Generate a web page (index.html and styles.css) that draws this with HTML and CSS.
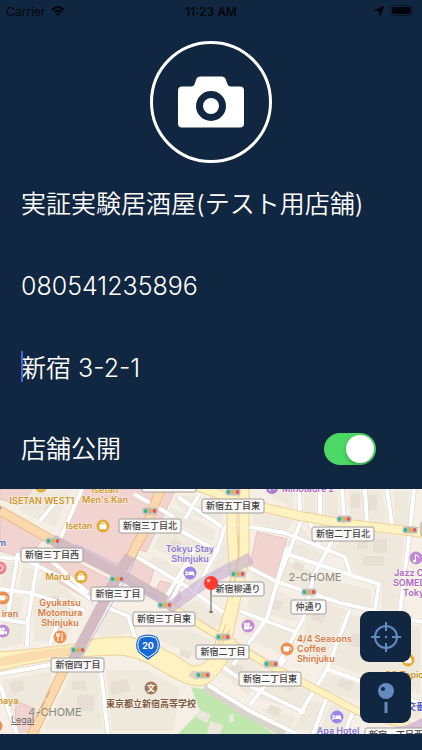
FILE: index.html
```html
<!DOCTYPE html>
<html lang="ja">
<head>
    <meta charset="UTF-8">
    <meta name="viewport" content="width=device-width, initial-scale=1.0">
    <title>店舗情報</title>
    <link rel="stylesheet" href="styles.css">
</head>
<body>

<header class="status-bar">
    <div class="status-left">
        <span>Carrier</span>
        <svg width="14" height="10" viewBox="0 0 14 10" fill="none" stroke="#02060c" stroke-width="2">
            <path d="M1 4 Q7 -2 13 4"/>
            <path d="M3.3 6.3 Q7 3 10.7 6.3"/>
            <path d="M7 10 L4.9 7.8 Q7 6.2 9.1 7.8 Z" fill="#02060c" stroke="none"/>
        </svg>
    </div>
    <div class="status-time">11:23 AM</div>
    <div class="status-right">
        <svg width="10" height="10" viewBox="0 0 10 10"><path d="M10 0 L6 10 L5 5 L0 4.4 Z" fill="#02060c" stroke="#02060c" stroke-width=".6"/></svg>
        <svg width="26" height="12" viewBox="0 0 26 12">
            <rect x="0.5" y="0.5" width="22" height="10" rx="3" fill="none" stroke="#091626"/>
            <rect x="2" y="2" width="19" height="7" rx="1.5" fill="#02060c"/>
            <path d="M24 4 Q26 5.5 24 7.5 Z" fill="#091626"/>
        </svg>
    </div>
</header>

<main class="shop-form">
    <button class="photo-btn" type="button" aria-label="写真を選択">
        <svg width="66" height="52" viewBox="0 0 66 52">
            <path d="M4 10.500 H13 Q16 10.500 17 7 L18.300 3 Q19.200 .5 22 .5 H44 Q46.800 .5 47.700 3 L49 7 Q50 10.500 53 10.500 H62 Q66 10.500 66 14.500 V47.500 Q66 51.500 62 51.500 H4 Q0 51.500 0 47.500 V14.500 Q0 10.500 4 10.500 Z" fill="#fff"/>
            <circle cx="33" cy="30" r="11.500" fill="#fff" stroke="#112640" stroke-width="7"/>
        </svg>
    </button>

    <div class="row">
        <input class="field" type="text" aria-label="店舗名" value="実証実験居酒屋(テスト用店舗)">
    </div>
    <div class="row">
        <input class="field" type="tel" aria-label="電話番号" value="080541235896">
    </div>
    <div class="row active">
        <input class="field" type="text" aria-label="住所" value="新宿 3-2-1">
    </div>
    <div class="row">
        <label class="switch-label" for="public">店舗公開</label>
        <input class="switch" type="checkbox" id="public" checked>
    </div>
</main>

<section class="map">
    <svg class="map-canvas" viewBox="0 0 422 245">
        <defs>
            <g id="signal">
                <rect x="-7.500" y="-3.500" width="15" height="7" rx="2.500" fill="#c3c1bf"/>
                <circle cx="-4.500" r="1.900" fill="#2cb5a0"/>
                <circle r="1.900" fill="#e9ad3c"/>
                <circle cx="4.500" r="1.900" fill="#e5565c"/>
            </g>
            <g id="bag">
                <circle r="6.500" fill="#e5aa32"/>
                <rect x="-3.500" y="-1.800" width="7" height="5" rx="1" fill="#fff"/>
                <path d="M-1.500 -2 V-3.300 H1.500 V-2" fill="none" stroke="#fff"/>
            </g>
            <g id="bed">
                <circle r="6.500" fill="#9a86e6"/>
                <path d="M-4 -2.500 V3 M-4 1.500 H4 V3" fill="none" stroke="#fff"/>
                <rect x="-1.500" y="-1.500" width="5.500" height="3" rx="1" fill="#fff"/>
                <circle cx="-2.700" cy="-.5" r="1" fill="#fff"/>
            </g>
            <g id="cinema">
                <circle r="6.500" fill="#c18bd6"/>
                <rect x="-4" y="-.5" width="5.500" height="4" rx="1" fill="#fff"/>
                <path d="M1.500 1 L4 0 V3.300 L1.500 2.500 Z" fill="#fff"/>
                <circle cx="-2.700" cy="-2" r="1.500" fill="#fff"/>
                <circle cx=".5" cy="-2" r="1.500" fill="#fff"/>
            </g>
            <g id="cup">
                <circle r="6.500" fill="#ec9150"/>
                <path d="M-3.500 -2.500 H2 V1 Q2 2.500 .5 2.500 H-2 Q-3.500 2.500 -3.500 1 Z" fill="#fff"/>
                <path d="M2 -1.500 H3.800 V.5 H2" fill="none" stroke="#fff" stroke-width=".8"/>
            </g>
            <g id="food">
                <circle r="6.500" fill="#ec9150"/>
                <path d="M-2 0 V4 M2 -4 V4 M-3.300 -4 V-1 H-.7 V-4 M-2 -4 V0" fill="none" stroke="#fff"/>
            </g>
        </defs>

        <rect width="422" height="245" fill="#f6efe5"/>

        <!-- blocks -->
        <path class="block" d="M22 3 L70 1 L55 38 L20 22 Z M4 72 L15 74 L10 98 L0 97 Z M23 76 L37 83 L34 102 L19 99 Z M45 80 L58 92 L77 112 L36 103 Z M32 109 L75 122 L67 151 L34 153 Z M2 105 L24 108 L19 130 L0 128 Z M2 134 L23 132 L23 154 L0 160 Z"/>
        <path class="block" d="M2 191 L52 182 L50 195 L28 238 L17 236 Z M72 184 L97 184 L103 240 L44 240 Z M106 181 L147 181 L180 200 L173 242 L112 242 Z M110 118 L127 129 L130 144 L104 148 L96 146 Z"/>
        <path class="block" d="M176 6 L196 8 L187 25 L174 12 Z M204 10 H223 V33 L191 27 Z M169 17 L215 41 L213 53 L174 33 Z M166 35 L212 62 L202 81 L153 59 Z M153 66 L198 88 L191 98 L149 74 Z M219 66 L229 43 V74 L200 104 Z M196 111 L224 130 L212 141 L179 118 Z M146 140 L188 141 L213 151 L200 170 L164 153 Z"/>
        <path class="block" d="M252 22 L293 31 L287 42 L253 34 Z M253 84 L279 95 L265 130 L247 120 Z M246 126 L262 134 L256 150 L243 145 Z M262 1 H293 V20 Z M304 2 H316 V26 L304 24 Z M324 2 H338 V28 L324 26 Z M348 2 H382 L387 33 L350 30 Z M393 2 H409 V37 L395 36 Z"/>
        <path class="block" d="M302 38 L316 57 L290 48 Z M312 38 L338 41 L329 56 Z M349 40 L404 48 L397 120 L382 120 V94 L355 84 L348 66 L333 60 Z M289 51 L323 64 L318 78 L285 64 Z M283 70 L313 83 L308 104 L277 89 Z M320 88 L372 101 L370 119 L309 102 Z"/>
        <path class="block" d="M276 101 L300 112 L297 133 L269 126 Z M310 109 L346 121 L325 172 L301 162 Z M350 126 L420 138 V205 L333 175 Z M268 134 L294 143 L283 166 L254 153 Z M247 157 L272 172 L265 180 L239 168 Z M227 160 L266 183 L248 207 L217 181 Z M279 184 L315 201 L302 221 L257 210 Z M329 185 L420 216 V231 L319 200 Z M256 217 L296 228 L290 242 Z M309 212 L323 213 L312 242 L294 240 Z M331 213 L351 224 L343 243 H319 Z"/>
        <path class="house" d="M24 7 h11 v6 h-11 Z M47 10 h9 l-3 12 h-9 Z M47 107 h12 v7 h-12 Z M9 194 l13 -3 3 10 -12 4 Z M72 192 h14 v9 h-14 Z M77 206 h17 v16 h-17 Z M110 193 l17 -3 4 12 -20 4 Z M181 160 l11 4 -3 6 -10 -4 Z M205 14 h9 v8 h-9 Z M174 49 l8 5 -5 9 -9 -5 Z M351 5 h9 v14 h-9 Z M368 6 h9 v15 h-9 Z M357 51 h11 v9 h-11 Z M373 50 h14 v14 h-14 Z M363 67 h21 v10 h-21 Z M315 119 l12 4 -4 11 -12 -4 Z M352 144 l18 3 -5 13 -17 -4 Z M379 146 h18 v12 h-18 Z M274 110 l9 3 -4 9 -9 -3 Z M283 189 l13 6 -5 8 -13 -6 Z M270 216 l12 4 -4 8 -11 -5 Z M341 189 l13 4 -4 9 -13 -5 Z M234 172 l10 7 -6 7 -9 -7 Z M295 72 l10 4 -3 7 -10 -4 Z"/>

        <!-- department stores -->
        <path class="store" d="M83 0 H158 L143 34 L123 78 L112 80 L60 50 Z"/>
        <path class="store" d="M0 27 L44 50 L36 58 L70 70 L115 93 L103 119 L60 94 L36 72 L0 62 Z"/>
        <path class="store" d="M0 0 H33 L18 16 L0 10 Z"/>
        <path class="store" d="M166 0 H176 L146 63 L134 58 Z"/>
        <path class="store" d="M134 68 L154 80 L148 100 L122 88 Z M160 92 L178 96 L181 110 L168 120 L152 108 Z"/>
        <path class="store" d="M257 43 L287 50 L277 91 L250 78 L252 66 Z"/>
        <path class="store" d="M16 212 L35 220 L29 243 H15 Z"/>

        <!-- park -->
        <path d="M191 198 L208 201 L240 223 L274 245 H178 L200 222 Z" fill="#c0e7ae"/>
        <path d="M200 221 l11 5 -4 8 -11 -6 Z M210 232 l13 4 -3 9 h-13 Z M229 227 l4 -3 1 8 -5 2 Z" fill="#ece7dc"/>
        <path d="M204 198 L240 221 L284 245" fill="none" stroke="#d9d4cc" stroke-width="7"/>

        <!-- streets -->
        <g class="street-edge">
            <path id="streets" d="M0 68 L25 71 L60 88 L98 115 L128 127 L135 148 M60 8 L40 32 M82 0 L60 50 M40 58 L28 131 L27 157 M0 100 L30 104 L85 122 M18 64 L7 131 M45 66 L88 104 M0 130 L28 134 M0 185 L60 174 M0 196 L17 245 M100 175 L108 245 M58 133 L50 155 M134 5 L150 14 L174 28 M193 106 L218 60 L224 40 Q226 35 234 35 L285 44 L345 68 L350 84 M178 8 L222 38 M185 30 L200 4 M166 34 L218 62 M134 66 L187 98 L230 128 M250 79 L277 93 L337 113 L422 133 M287 58 L267 129 L233 176 M305 22 L277 93 M299 0 L300 24 M320 0 V28 M342 0 L344 30 M365 0 L367 34 M387 0 L392 36 M414 0 L410 40 L400 123 M342 33 L314 86 L303 130 L277 178 M308 28 L320 58 M287 65 L350 86 L379 95 L375 121 M350 121 L327 180 L300 225 M327 180 L422 215 M327 208 L313 245 M353 223 L344 245 M223 178 L252 198 L305 224 M285 170 L250 216 M208 196 L250 222 L297 245 M240 122 L298 144 M165 110 L195 60 M168 118 L190 75 M385 190 L380 225"/>
        </g>
        <use href="#streets" class="street"/>

        <!-- main roads -->
        <path class="road-edge" stroke-width="11" d="M232 -4 V42 L236 100 L219 158"/>
        <path class="road-edge" stroke-width="11" d="M244 -4 V70 L228 145 L216 176"/>
        <path class="road-edge" stroke-width="10" d="M194 -4 L240 13 L300 27 L340 34 L425 44"/>
        <path class="road-edge" stroke-width="8" d="M165 114 L217 146 L267 175 L327 206 L357 222 L425 242"/>
        <path d="M-2 163 Q40 160 75 155 Q95 147 130 148 Q160 154 192 177 Q202 178 210 168 L219 150 L236 150 L226 174 Q212 196 200 197 Q186 197 165 184 Q135 164 112 166 Q50 168 -2 182 Z" fill="#fef2c0" stroke="#edcf98"/>
        <path class="road" stroke-width="9" d="M232 -4 V42 L236 100 L219 158"/>
        <path class="road" stroke-width="9" d="M244 -4 V70 L228 145 L216 176"/>
        <path class="road" stroke-width="8" d="M194 -4 L240 13 L300 27 L340 34 L425 44"/>
        <path class="road" stroke-width="6" d="M165 114 L217 146 L267 175 L327 206 L357 222 L425 242"/>
        <path d="M239 45 L238 70 L232 110 M226 135 L217 160 M230 140 L215 168" fill="none" stroke="#e8c88d"/>
        <path d="M0 173 Q42 164 76 162" fill="none" stroke="#fbdcae" stroke-width="9"/>
        <path d="M188 187 L193 181 L200 184 L197 191 Z" fill="#ddd5c2"/>

        <path class="orange-edge" d="M-3 20 L57 54 M162 -3 L144 42 L130 69 M66 176 L31 248"/>
        <path class="orange" d="M-3 20 L57 54 M162 -3 L144 42 L130 69 M66 176 L31 248"/>
        <path d="M50 202 L37 228" stroke="#b9a99b" stroke-dasharray="8 3"/>

        <!-- underground passages -->
        <path class="tunnel" d="M53 51 L118 84 L166 112 M130 67 L118 86 L99 122 L70 177"/>
        <path d="M168 120 L205 93 L251 69" fill="none" stroke="#bda5d0" stroke-opacity=".55" stroke-width="12"/>
        <path d="M75 55 L118 76 M137 66 L128 86 L82 168 M128 92 L160 111 M420 234 L385 241" fill="none" stroke="#aeb0e8" stroke-opacity=".8"/>
        <path d="M400 240 L422 229 V245 H392 Z" fill="#d9bfd4"/>

        <!-- route shield -->
        <path d="M140 149 Q148 145 156 149 Q161 156 156 163 L148 169 L140 163 Q135 156 140 149 Z" fill="#1668d6" stroke="#1668d6" stroke-width="3"/>
        <path d="M140 149 Q148 145.500 156 149 Q160.500 156 156 163 L148 168.500 L140 163 Q135.500 156 140 149 Z" fill="#1668d6" stroke="#fff" stroke-width="1"/>
        <text class="shield" x="148" y="160">20</text>

        <!-- signals -->
        <use href="#signal" x="53" y="52"/>
        <use href="#signal" x="117" y="90"/>
        <use href="#signal" x="150" y="22"/>
        <use href="#signal" x="233" y="3"/>
        <use href="#signal" x="238" y="85"/>
        <use href="#signal" x="165" y="116"/>
        <use href="#signal" x="344" y="30"/>
        <use href="#signal" x="410" y="41"/>
        <use href="#signal" x="309" y="103"/>
        <use href="#signal" x="78" y="161"/>
        <use href="#signal" x="223" y="148"/>
        <use href="#signal" x="203" y="186"/>
        <use href="#signal" x="271" y="175"/>

        <!-- crossing names -->
        <g class="plate">
            <rect x="142" y="-11" width="54" height="14" rx="2"/>
            <rect x="21" y="59" width="62" height="14" rx="2"/>
            <rect x="119" y="30" width="62" height="14" rx="2"/>
            <rect x="202" y="10" width="62" height="14" rx="2"/>
            <rect x="312" y="38" width="62" height="14" rx="2"/>
            <rect x="91" y="98" width="53" height="14" rx="2"/>
            <rect x="133" y="123" width="62" height="14" rx="2"/>
            <rect x="211" y="93" width="53" height="14" rx="2"/>
            <rect x="291" y="111" width="35" height="14" rx="2"/>
            <rect x="51" y="169" width="53" height="14" rx="2"/>
            <rect x="196" y="156" width="53" height="14" rx="2"/>
            <rect x="239" y="183" width="62" height="14" rx="2"/>
            <rect x="365" y="239" width="62" height="14" rx="2"/>
            <rect x="421" y="33" width="40" height="14" rx="2"/>
        </g>
        <g class="crossing">
            <text x="52" y="69">新宿三丁目西</text>
            <text x="150" y="40">新宿三丁目北</text>
            <text x="233" y="20">新宿五丁目東</text>
            <text x="343" y="48">新宿二丁目北</text>
            <text x="118" y="108">新宿三丁目</text>
            <text x="164" y="133">新宿三丁目東</text>
            <text x="238" y="103">新宿柳通り</text>
            <text x="309" y="121">仲通り</text>
            <text x="78" y="179">新宿四丁目</text>
            <text x="223" y="166">新宿二丁目</text>
            <text x="270" y="193">新宿二丁目東</text>
            <text x="396" y="249">新宿一丁目西</text>
        </g>

        <!-- places -->
        <use href="#bag" x="41" y="-3"/>
        <use href="#bag" x="103" y="37"/>
        <use href="#bag" x="81" y="88"/>
        <use href="#bag" x="408" y="171"/>
        <use href="#bed" x="190" y="84"/>
        <use href="#bed" x="337" y="228"/>
        <use href="#cinema" x="3" y="142"/>
        <use href="#cinema" x="248" y="137"/>
        <use href="#cup" x="287" y="160"/>
        <use href="#cup" x="3" y="109"/>
        <use href="#food" x="60" y="148"/>
        <circle cx="0" cy="79" r="6.500" fill="#ee7f93"/>
        <path d="M-1 76 Q4 76 3 79 Q3 82 -1 82" fill="none" stroke="#fff"/>
        <circle cx="-4" cy="237" r="6.500" fill="#ec9150"/>
        <circle cx="0" cy="19" r="1.500" fill="#999"/>
        <circle cx="272" cy="-1" r="6" fill="#b07bd0"/>
        <path d="M270 2 V-2 M274 1 V-2" stroke="#fff"/>
        <circle cx="416" cy="69" r="6.500" fill="#c18bd6"/>
        <path d="M415.500 72 V65.500 Q418 66 419 68.500" fill="none" stroke="#fff"/>
        <circle cx="414.500" cy="72" r="1.500" fill="#fff"/>
        <circle cx="151" cy="199" r="6.500" fill="#a1795a"/>
        <text class="school-mark" x="151" y="202">文</text>

        <g class="poi gold">
            <text x="42" y="15">ISETAN WEST1</text>
            <text x="105" y="4">Isetan</text>
            <text x="105" y="14">Men's Kan</text>
            <text x="79" y="40">Isetan</text>
            <text x="58" y="91">Marui</text>
            <text x="8" y="215">naya</text>
            <text x="404" y="189">CC Topio</text>
        </g>
        <g class="poi orange-text">
            <text x="60" y="117">Gyukatsu</text>
            <text x="60" y="127">Motomura</text>
            <text x="60" y="137">Shinjuku</text>
            <text x="10" y="128">iran</text>
        </g>
        <g class="poi orange-text poi-start">
            <text x="297" y="153">4/4 Seasons</text>
            <text x="297" y="163">Coffee</text>
            <text x="297" y="173">Shinjuku</text>
        </g>
        <g class="poi violet">
            <text x="190" y="63">Tokyu Stay</text>
            <text x="190" y="73">Shinjuku</text>
            <text x="338" y="245">Apa Hotel</text>
        </g>
        <g class="poi purple poi-start">
            <text x="282" y="3">Minotaure 2</text>
            <text x="394" y="87">Jazz Club</text>
            <text x="393" y="97">SOMEDAY</text>
            <text x="403" y="107">Tokyo</text>
        </g>
        <g class="poi blue poi-start">
            <text x="-2" y="57">m</text>
            <text x="407" y="221">交番</text>
        </g>
        <text class="poi school" x="151" y="218">東京都立新宿高等学校</text>
        <text class="chome" x="315" y="92">2-CHOME</text>
        <text class="chome" x="55" y="227">4-CHOME</text>

        <!-- pin -->
        <path d="M211 98 V122" stroke="#8d8d8d" stroke-width="1.500"/>
        <ellipse cx="211" cy="123" rx="2" ry="1" fill="#666"/>
        <circle cx="211" cy="94" r="7" fill="#fb3b30"/>
        <circle cx="208.500" cy="91.500" r="1.800" fill="#ffb0aa"/>
    </svg>

    <a class="legal" href="#">Legal</a>

    <div class="map-buttons">
        <button class="map-btn" type="button" aria-label="現在地">
            <svg width="32" height="32" viewBox="0 0 32 32" fill="none" stroke="#648bc0" stroke-width="2">
                <circle cx="16" cy="16" r="11"/>
                <path d="M16 1 V10 M16 22 V31 M1 16 H10 M22 16 H31"/>
                <circle cx="16" cy="16" r="1.200" fill="#648bc0" stroke="none"/>
            </svg>
        </button>
        <button class="map-btn" type="button" aria-label="ピンを置く">
            <svg width="32" height="32" viewBox="0 0 32 32">
                <circle cx="16" cy="9" r="8" fill="#648bc0"/>
                <circle cx="13" cy="7" r="2" fill="#112640"/>
                <path d="M16 20 V31" stroke="#648bc0" stroke-width="3"/>
            </svg>
        </button>
    </div>
</section>

</body>
</html>
```
FILE: styles.css
```css
* {
    box-sizing: border-box;
}

body {
    margin: 0;
    min-height: 100vh;
    background-color: #112640;
    color: #fff;
    font-family: Inter, 'Noto Sans CJK JP', sans-serif;
}

.status-bar {
    display: grid;
    grid-template-columns: 1fr auto 1fr;
    align-items: center;
    height: 22px;
    padding: 0 6px;
    color: #02060c;
    font-size: 12px;
}

.status-left, .status-right {
    display: flex;
    align-items: center;
    gap: 6px;
}

.status-right {
    justify-content: flex-end;
}

.status-time {
    font-weight: 600;
}

.shop-form {
    display: flex;
    flex-direction: column;
    padding-top: 19px;
}

.photo-btn {
    display: flex;
    align-items: center;
    justify-content: center;
    align-self: center;
    width: 122px;
    height: 122px;
    padding: 0;
    border: 3px solid #fff;
    border-radius: 50%;
    background: none;
    cursor: pointer;
}

.row {
    position: relative;
    display: flex;
    align-items: center;
    justify-content: space-between;
    height: 82px;
    padding: 0 46px 0 21px;
}

.row:last-child {
    height: 80px;
}

/* text cursor of the field being edited */
.row.active::before {
    content: "";
    position: absolute;
    left: 21px;
    top: 24px;
    width: 2px;
    height: 31px;
    background-color: #4666d8;
}

.field {
    flex: 1;
    min-width: 0;
    padding: 0;
    border: none;
    outline: none;
    background: none;
}

.field, .switch-label {
    color: #fff;
    font-family: Inter, 'Noto Sans CJK JP', sans-serif;
    font-size: 25px;
    font-weight: 350;
    line-height: 36px;
}

.switch {
    appearance: none;
    position: relative;
    width: 52px;
    height: 32px;
    margin: 0;
    border-radius: 16px;
    background-color: #58687c;
    cursor: pointer;
}

.switch::before {
    content: "";
    position: absolute;
    top: 2px;
    left: 2px;
    width: 28px;
    height: 28px;
    border-radius: 50%;
    background-color: #fff;
    box-shadow: 0 2px 4px rgba(0, 0, 0, 0.25);
}

.switch:checked {
    background-color: #4cd864;
}

.switch:checked::before {
    left: 22px;
}

.map {
    position: relative;
}

.map-canvas {
    display: block;
    width: 100%;
    font-family: Inter, 'Noto Sans CJK JP', sans-serif;
}

.block {
    fill: #efe8dd;
}

.house {
    fill: #e7dfd4;
}

.store {
    fill: #f1d3cf;
    stroke: #e8c3be;
}

.street-edge {
    fill: none;
    stroke: #d5cfc8;
    stroke-width: 5;
}

.street {
    fill: none;
    stroke: #fff;
    stroke-width: 4;
}

.road-edge {
    fill: none;
    stroke: #edcf98;
}

.road {
    fill: none;
    stroke: #fef2c0;
}

.orange-edge {
    fill: none;
    stroke: #eab98a;
    stroke-width: 10;
}

.orange {
    fill: none;
    stroke: #fcd9ac;
    stroke-width: 8;
}

.tunnel {
    fill: none;
    stroke: #d3bbc1;
    stroke-width: 11;
}

.plate rect {
    fill: #fbf9f7;
    stroke: #a09e9c;
}

.crossing text {
    fill: #444;
    font-size: 9px;
    font-weight: 500;
    text-anchor: middle;
}

.poi {
    font-size: 9px;
    font-weight: 600;
    text-anchor: middle;
    stroke: #fbf7f2;
    stroke-width: 1px;
    stroke-linejoin: round;
    paint-order: stroke;
}

.poi-start {
    text-anchor: start;
}

.gold {
    fill: #cf9528;
}

.orange-text {
    fill: #d57a40;
}

.violet {
    fill: #8975d6;
}

.purple {
    fill: #ac68c4;
}

.blue {
    fill: #525fc0;
}

.school {
    fill: #805a3e;
}

.chome {
    fill: #8a8784;
    font-size: 11px;
    text-anchor: middle;
}

.shield {
    fill: #fff;
    font-size: 9px;
    font-weight: 700;
    text-anchor: middle;
}

.school-mark {
    fill: #fff;
    font-size: 8px;
    font-weight: 700;
    text-anchor: middle;
}

.legal {
    position: absolute;
    left: 11px;
    bottom: 8px;
    color: #6b6865;
    font-size: 9px;
    line-height: 12px;
}

.map-buttons {
    position: absolute;
    right: 11px;
    bottom: 11px;
    display: flex;
    flex-direction: column;
    gap: 10px;
}

.map-btn {
    display: flex;
    align-items: center;
    justify-content: center;
    width: 51px;
    height: 51px;
    padding: 0;
    border: none;
    border-radius: 9px;
    background-color: #112640;
    cursor: pointer;
}
```
